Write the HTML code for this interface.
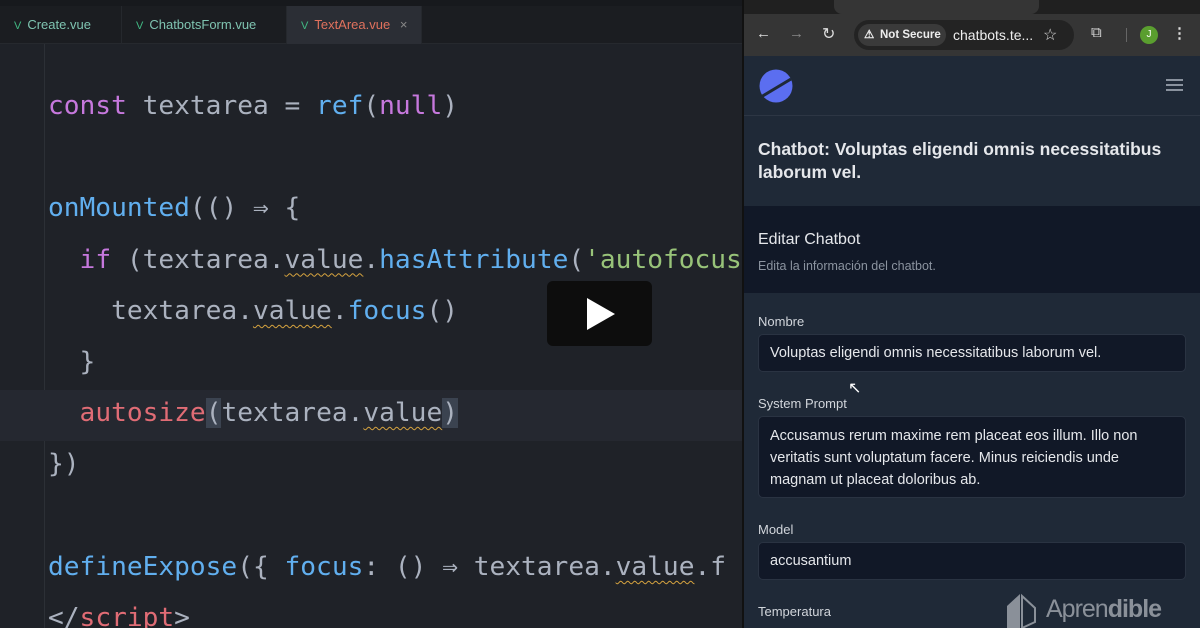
<!DOCTYPE html><html><head><meta charset="utf-8"><style>
*{margin:0;padding:0;box-sizing:border-box}
html,body{width:1200px;height:628px;overflow:hidden}
body{background:#1e2126;position:relative;font-family:"Liberation Sans",sans-serif}
.ed{position:absolute;left:0;top:0;width:742px;height:628px;background:#1f2228;overflow:hidden}
.top{position:absolute;left:0;top:0;width:742px;height:6px;background:#17191d}
.tabs{position:absolute;left:0;top:6px;width:742px;height:38px;background:#1b1d21;border-bottom:1px solid #26292e}
.tab{position:absolute;top:0;height:38px;line-height:38px;font-size:13px;color:#7fc4b1;padding-left:14px;border-right:1px solid #25282d;white-space:nowrap}
.tab b{color:#41b883;font-weight:normal;font-size:11px;margin-right:6px}
.code{position:absolute;left:48px;top:81px;font-family:"DejaVu Sans Mono",monospace;font-size:26.2px;line-height:51.2px;color:#abb2bf;white-space:pre}
.k{color:#c678dd}.f{color:#61afef}.r{color:#e06c75}.s{color:#98c379}.w{text-decoration:underline wavy #d6a33f;text-decoration-thickness:1px;text-underline-offset:5px}
.cl{position:absolute;left:0;top:390px;width:742px;height:51px;background:#252830}
.br{background:#3b4350}
.guide{position:absolute;left:44px;top:44px;width:1px;height:584px;background:#2c3036}
.play{position:absolute;left:547px;top:281px;width:105px;height:65px;background:#0d0d0d;border-radius:6px}
.play:after{content:"";position:absolute;left:40px;top:17px;border-left:28px solid #fff;border-top:16px solid transparent;border-bottom:16px solid transparent}
.bw{position:absolute;left:742px;top:0;width:458px;height:628px;background:#1f2937;font-family:"Liberation Sans",sans-serif;border-left:2px solid #111;overflow:hidden}
.ct{position:absolute;left:0;top:0;width:458px;height:14px;background:#202020}
.tb{position:absolute;left:0;top:14px;width:458px;height:42px;background:#353535;color:#ddd}
.url{position:absolute;left:110px;top:6px;width:220px;height:30px;border-radius:15px;background:#232323}
.ns{position:absolute;left:4px;top:4px;height:22px;width:88px;border-radius:11px;background:#3a3a3a;font-size:11.5px;font-weight:bold;line-height:22px;padding-left:22px;color:#eee;white-space:nowrap}
.hdr{position:absolute;left:0;top:56px;width:458px;height:60px;border-bottom:1px solid #2d3644}
.t1{position:absolute;left:14px;top:138px;font-size:17.5px;color:#e5e7eb;font-weight:bold;line-height:23px;width:425px}
.sec{position:absolute;left:0;top:206px;width:458px;height:87px;background:#111827}
.lbl{position:absolute;left:14px;font-size:13px;color:#d1d5db}
.inp{position:absolute;left:14px;width:428px;background:#111827;border:1px solid #2a3342;border-radius:5px;font-size:14.5px;color:#e5e7eb;padding:9px 11px;line-height:22px}
</style></head><body>
<div class="ed">
<div class="top"></div>
<div class="tabs">
<div class="tab" style="left:0;width:122px"><b>V</b>Create.vue</div>
<div class="tab" style="left:122px;width:165px"><b>V</b>ChatbotsForm.vue</div>
<div class="tab" style="left:287px;width:135px;background:#2b2e35;color:#e0715d"><b>V</b>TextArea.vue <span style="color:#888;margin-left:6px">×</span></div>
</div>
<div class="guide"></div>
<div class="cl"></div>
<div class="code"><span class="k">const</span> textarea = <span class="f">ref</span>(<span class="k">null</span>)

<span class="f">onMounted</span>(() ⇒ {
  <span class="k">if</span> (textarea.<span class="w">value</span>.<span class="f">hasAttribute</span>(<span class="s">'autofocus</span>
    textarea.<span class="w">value</span>.<span class="f">focus</span>()
  }
  <span class="r">autosize</span><span class="br">(</span>textarea.<span class="w">value</span><span class="br">)</span>
})

<span class="f">defineExpose</span>({ <span class="f">focus</span>: () ⇒ textarea.<span class="w">value</span>.f
&lt;/<span class="r">script</span>&gt;</div>
<div class="play"></div>
</div>
<div class="bw">
<div class="ct"><div style="position:absolute;left:90px;top:0;width:205px;height:14px;background:#353535;border-radius:0 0 8px 8px"></div></div>
<div class="tb">
<span style="position:absolute;left:12px;top:11px;font-size:15px">←</span>
<span style="position:absolute;left:45px;top:11px;font-size:15px;color:#888">→</span>
<span style="position:absolute;left:78px;top:10px;font-size:16px">↻</span>
<div class="url"><div class="ns"><span style="position:absolute;left:6px;top:0">⚠</span>Not Secure</div><span style="position:absolute;left:99px;top:7px;font-size:14px;color:#eee">chatbots.te...</span><span style="position:absolute;left:189px;top:5px;font-size:16px">☆</span></div>
<span style="position:absolute;left:347px;top:10px;font-size:15px">⧉</span>
<div style="position:absolute;left:382px;top:14px;width:1px;height:14px;background:#666"></div>
<div style="position:absolute;left:396px;top:12px;width:18px;height:18px;border-radius:50%;background:#5a9e2f;color:#fff;font-size:10px;text-align:center;line-height:18px">J</div>
<span style="position:absolute;left:428px;top:10px;font-size:15px;font-weight:bold">⋮</span>
</div>
<div class="hdr">
<svg style="position:absolute;left:15px;top:13px" width="34" height="34" viewBox="0 0 34 34"><circle cx="17" cy="17" r="16.5" fill="#5b6ef0"/><path d="M2 28 L32 10" stroke="#1f2937" stroke-width="3"/></svg>
<div style="position:absolute;left:422px;top:23px;width:17px;height:2px;background:#8a929e;box-shadow:0 5px 0 #8a929e,0 10px 0 #8a929e"></div>
</div>
<div class="t1">Chatbot: Voluptas eligendi omnis necessitatibus laborum vel.</div>
<div class="sec"><div style="position:absolute;left:14px;top:25px;font-size:16px;color:#e5e7eb">Editar Chatbot</div><div style="position:absolute;left:14px;top:53px;font-size:12.5px;color:#8b939f">Edita la información del chatbot.</div></div>
<div class="lbl" style="top:314px">Nombre</div>
<div class="inp" style="top:334px;height:38px;padding-top:7px">Voluptas eligendi omnis necessitatibus laborum vel.</div>
<div class="lbl" style="top:396px">System Prompt</div>
<div class="inp" style="top:416px;height:82px;padding-top:8px">Accusamus rerum maxime rem placeat eos illum. Illo non veritatis sunt voluptatum facere. Minus reiciendis unde magnam ut placeat doloribus ab.</div>
<div class="lbl" style="top:522px">Model</div>
<div class="inp" style="top:542px;height:38px;padding-top:7px">accusantium</div>
<div class="lbl" style="top:604px">Temperatura</div>
<div style="position:absolute;left:262px;top:592px;width:30px;height:36px"><svg width="30" height="36"><path d="M1 14 L14 2 L14 36 L1 36Z" fill="#8a9099"/><path d="M16 4 L29 16 L29 30 L16 36Z" fill="none" stroke="#8a9099" stroke-width="2"/></svg></div>
<div style="position:absolute;left:302px;top:595px;font-size:25px;color:#8a9099;letter-spacing:-1px">Apren<b>dible</b></div>
</div>
<span style="position:absolute;left:848px;top:378px;font-size:16px;color:#fff">↖</span>
</body></html>
